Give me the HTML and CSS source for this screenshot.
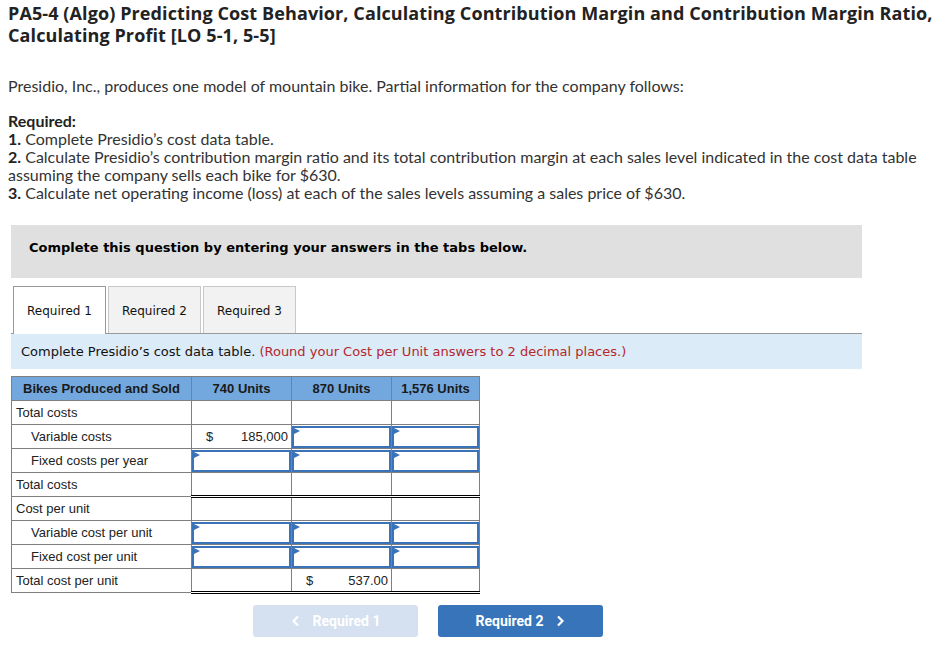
FILE: index.html
```html
<!DOCTYPE html>
<html>
<head>
<meta charset="utf-8">
<link rel="stylesheet" href="styles.css">
</head>
<body>
<h1 class="title">PA5-4 (Algo) Predicting Cost Behavior, Calculating Contribution Margin and Contribution Margin Ratio, Calculating Profit [LO 5-1, 5-5]</h1>
<p class="intro">Presidio, Inc., produces one model of mountain bike. Partial information for the company follows:</p>
<div class="req">
  <div><b>Required:</b></div>
  <div><b>1.</b> Complete Presidio’s cost data table.</div>
  <div><b>2.</b> Calculate Presidio’s contribution margin ratio and its total contribution margin at each sales level indicated in the cost data table assuming the company sells each bike for $630.</div>
  <div><b>3.</b> Calculate net operating income (loss) at each of the sales levels assuming a sales price of $630.</div>
</div>
<div class="work">
  <div class="notice">Complete this question by entering your answers in the tabs below.</div>
  <div class="tabs">
    <div class="tab active">Required 1</div>
    <div class="tab">Required 2</div>
    <div class="tab">Required 3</div>
  </div>
  <div class="instr">Complete Presidio’s cost data table. <span class="red">(Round your Cost per Unit answers to 2 decimal places.)</span></div>
  <table class="grid">
    <colgroup><col class="c1"><col class="c2"><col class="c2"><col class="c3"></colgroup>
    <tr class="head"><th>Bikes Produced and Sold</th><th>740 Units</th><th>870 Units</th><th>1,576 Units</th></tr>
    <tr><td class="lab">Total costs</td><td></td><td></td><td></td></tr>
    <tr><td class="lab ind">Variable costs</td><td class="val"><span class="cur">$</span><span class="num">185,000</span></td><td class="in"><div class="box"></div></td><td class="in"><div class="box"></div></td></tr>
    <tr><td class="lab ind">Fixed costs per year</td><td class="in"><div class="box"></div></td><td class="in"><div class="box"></div></td><td class="in"><div class="box"></div></td></tr>
    <tr class="tot"><td class="lab">Total costs</td><td></td><td></td><td></td></tr>
    <tr><td class="lab">Cost per unit</td><td></td><td></td><td></td></tr>
    <tr><td class="lab ind">Variable cost per unit</td><td class="in"><div class="box"></div></td><td class="in"><div class="box"></div></td><td class="in"><div class="box"></div></td></tr>
    <tr><td class="lab ind">Fixed cost per unit</td><td class="in"><div class="box"></div></td><td class="in"><div class="box"></div></td><td class="in"><div class="box"></div></td></tr>
    <tr class="tot"><td class="lab">Total cost per unit</td><td></td><td class="val"><span class="cur">$</span><span class="num">537.00</span></td><td></td></tr>
  </table>
  <div class="nav">
    <div class="btn prev"><svg width="10" height="12" viewBox="0 0 10 12"><path d="M7 1.5 L2.5 6 L7 10.5" fill="none" stroke="#fff" stroke-width="2.2"/></svg><span>Required 1</span></div>
    <div class="btn next"><span>Required 2</span><svg width="10" height="12" viewBox="0 0 10 12"><path d="M3 1.5 L7.5 6 L3 10.5" fill="none" stroke="#fff" stroke-width="2.2"/></svg></div>
  </div>
</div>
</body>
</html>
```
FILE: styles.css
```css
body {
  margin: 0;
  padding: 0 8px;
  background: #fff;
  color: #333;
  font-family: Lato, "Open Sans", sans-serif;
}
.title {
  margin: 0 -7px 0 0;
  padding-top: 2px;
  font-family: "Open Sans", Lato, sans-serif;
  font-size: 18px;
  line-height: 22px;
  font-weight: 700;
  letter-spacing: 0.1px;
  color: #222;
}
.intro {
  margin: 31px 0 0;
  font-size: 16px;
  line-height: 18px;
}
.req {
  margin-top: 17px;
  font-size: 16px;
  line-height: 18px;
}
.req b { color: #222; }
.work {
  margin: 23px 0 0 3px;
  width: 851px;
}
.notice {
  background: #e0e0e0;
  height: 53px;
  box-sizing: border-box;
  padding: 15px 0 0 18px;
  font-family: "DejaVu Sans", Verdana, sans-serif;
  font-weight: 700;
  font-size: 13px;
  line-height: 16px;
  color: #000;
}
.tabs {
  display: flex;
  align-items: flex-end;
  margin-top: 8px;
  border-bottom: 1px solid #999;
  height: 47px;
  padding-left: 2px;
  gap: 2px;
}
.tab {
  box-sizing: border-box;
  height: 47px;
  width: 93px;
  border: 1px solid #c8c8c8;
  border-bottom: none;
  background: #f2f2f2;
  font-family: "DejaVu Sans", Verdana, sans-serif;
  font-size: 12px;
  color: #111;
  display: flex;
  align-items: center;
  justify-content: center;
  padding-top: 1px;
}
.tab.active {
  background: #fff;
  border-color: #999;
  height: 48px;
  margin-bottom: -1px;
}
.instr {
  background: #dcebf8;
  height: 35px;
  box-sizing: border-box;
  padding: 10px 0 0 10px;
  font-family: "DejaVu Sans", Verdana, sans-serif;
  font-size: 13px;
  line-height: 16px;
  color: #111;
}
.red { color: #b5272d; }
.grid {
  margin-top: 7px;
  border-collapse: collapse;
  font-family: "Liberation Sans", Arial, sans-serif;
  font-size: 13px;
  color: #222;
}
.c1 { width: 180px; }
.c2 { width: 100px; }
.c3 { width: 88px; }
.grid th, .grid td {
  border: 1px solid #7f7f7f;
  height: 24px;
  padding: 0;
  box-sizing: border-box;
}
.grid th {
  background: #72a8dd;
  font-weight: 700;
  color: #1a1a1a;
  height: 24px;
}
.grid .lab { padding-left: 4px; text-align: left; }
.grid .lab.ind { padding-left: 19px; }
.grid td.in { padding: 0; position: relative; }
.box {
  height: 22px;
  border: 2px solid #3b73b9;
  box-sizing: border-box;
  margin: 0;
  position: relative;
}
.box::before {
  content: "";
  position: absolute;
  left: 0;
  top: 0;
  border-left: 6px solid #3b73b9;
  border-top: 3px solid transparent;
  border-bottom: 3px solid transparent;
}
.val { padding: 0 3px 0 14px !important; }
.val .cur { float: left; }
.val .num { float: right; }
.grid tr.tot td:not(.lab) {
  border-top: 1px solid #000;
  border-bottom: 3px double #000;
}
.nav {
  display: flex;
  gap: 20px;
  margin: 11px 0 0 242px;
}
.btn {
  width: 165px;
  height: 32px;
  border-radius: 3px;
  display: flex;
  align-items: center;
  justify-content: center;
  gap: 12px;
  font-family: Roboto, "Liberation Sans", sans-serif;
  font-weight: 700;
  font-size: 14px;
  color: #fff;
}
.prev { background: #d5e1f0; }
.next { background: #3874ba; }
```
